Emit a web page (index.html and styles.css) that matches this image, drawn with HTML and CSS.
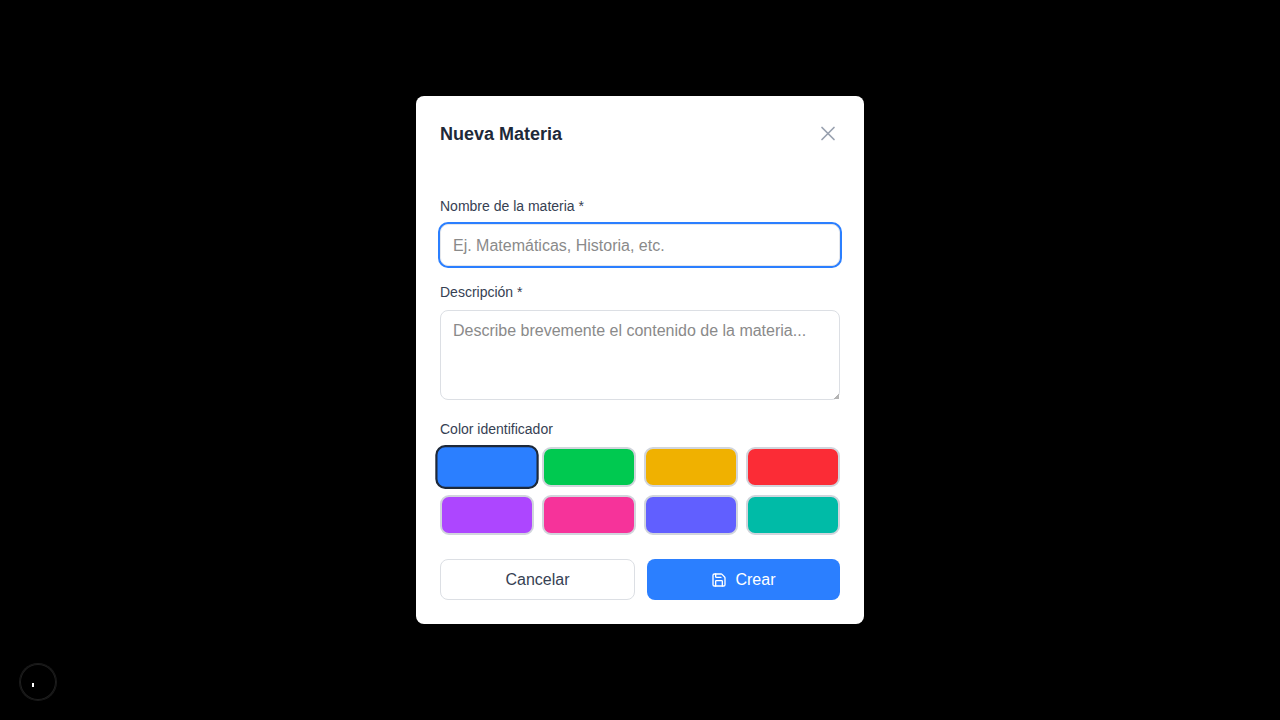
FILE: index.html
```html
<!DOCTYPE html>
<html lang="es">
<head>
<meta charset="utf-8">
<title>Nueva Materia</title>
<link rel="stylesheet" href="styles.css">
</head>
<body>
<div class="overlay">
  <section class="modal" role="dialog" aria-labelledby="modal-title">
    <header class="modal-header">
      <h2 class="modal-title" id="modal-title">Nueva Materia</h2>
      <button class="close" type="button" aria-label="Cerrar">
        <svg width="24" height="24" viewBox="0 0 24 24" fill="none" stroke="currentColor" stroke-width="1.7" stroke-linecap="round" stroke-linejoin="round"><path d="M18 5.500 6 17.500"/><path d="m6 5.500 12 12"/></svg>
      </button>
    </header>
    <form class="form">
      <div class="field">
        <label class="label" for="name">Nombre de la materia *</label>
        <input class="control control-active" id="name" type="text" placeholder="Ej. Matemáticas, Historia, etc.">
      </div>
      <div class="field">
        <label class="label" for="description">Descripción *</label>
        <textarea class="control" id="description" rows="3" placeholder="Describe brevemente el contenido de la materia..."></textarea>
      </div>
      <div class="field field-colors" role="group" aria-labelledby="color-label">
        <span class="label" id="color-label">Color identificador</span>
        <div class="swatches">
          <button class="swatch blue selected" type="button" aria-label="Azul"></button>
          <button class="swatch green" type="button" aria-label="Verde"></button>
          <button class="swatch yellow" type="button" aria-label="Amarillo"></button>
          <button class="swatch red" type="button" aria-label="Rojo"></button>
          <button class="swatch purple" type="button" aria-label="Morado"></button>
          <button class="swatch pink" type="button" aria-label="Rosa"></button>
          <button class="swatch indigo" type="button" aria-label="Índigo"></button>
          <button class="swatch teal" type="button" aria-label="Turquesa"></button>
        </div>
      </div>
      <div class="actions">
        <button class="button cancel" type="button">Cancelar</button>
        <button class="button create" type="submit">
          <svg width="16" height="16" viewBox="0 0 24 24" fill="none" stroke="currentColor" stroke-width="2" stroke-linecap="round" stroke-linejoin="round"><path d="M15.2 3a2 2 0 0 1 1.4.6l3.8 3.8a2 2 0 0 1 .6 1.4V19a2 2 0 0 1-2 2H5a2 2 0 0 1-2-2V5a2 2 0 0 1 2-2z"/><path d="M17 21v-7a1 1 0 0 0-1-1H8a1 1 0 0 0-1 1v7"/><path d="M7 3v4a1 1 0 0 0 1 1h7"/></svg>
          Crear
        </button>
      </div>
    </form>
  </section>
</div>
<div class="badge"><span class="badge-mark"></span></div>
</body>
</html>
```
FILE: styles.css
```css
* { box-sizing: border-box; }
body {
  margin: 0;
  background: #000;
  color: #364153;
  font-family: "Liberation Sans", Arial, sans-serif;
  font-size: 16px;
  line-height: 24px;
}
button, input, textarea { font: inherit; color: inherit; }
button { cursor: pointer; }
.overlay {
  min-height: 100vh;
  padding: 16px;
  display: flex;
  align-items: center;
  justify-content: center;
}
.modal {
  width: 100%;
  max-width: 448px;
  background: #fff;
  border-radius: 8px;
}
.modal-header {
  display: flex;
  align-items: center;
  justify-content: space-between;
  padding: 24px;
}
.modal-title {
  margin: 0;
  font-size: 18px;
  line-height: 28px;
  font-weight: 700;
  color: #1e2939;
}
.close {
  display: flex;
  padding: 0;
  border: 0;
  background: none;
  color: #99a1af;
}
.form {
  display: flex;
  flex-direction: column;
  gap: 16px;
  padding: 24px;
}
.field {
  display: flex;
  flex-direction: column;
  gap: 8px;
}
.field-colors { margin-top: 3px; }
.label {
  font-size: 14px;
  line-height: 20px;
}
.control {
  display: block;
  width: 100%;
  padding: 8px 12px;
  border: 1px solid #dcdfe4;
  border-radius: 8px;
  background: #fff;
  outline: none;
}
.control::placeholder { color: #8a8a8a; }
.control-active {
  padding: 9px 12px 7px;
  border-color: #e5e7eb;
  box-shadow: 0 0 0 2px #2b7fff;
}
textarea.control { resize: vertical; }
textarea.control::-webkit-resizer {
  background: linear-gradient(135deg, transparent 82%, #b4b4b4 82%);
}
.swatches {
  display: grid;
  grid-template-columns: repeat(4, 1fr);
  gap: 8px;
}
.swatch {
  height: 40px;
  padding: 0;
  border: 2px solid #d1d5dc;
  border-radius: 9px;
}
.selected {
  border-color: #1e2939;
  transform: scale(1.1);
}
.blue { background: #2b7fff; }
.green { background: #00c950; }
.yellow { background: #f0b100; }
.red { background: #fb2c36; }
.purple { background: #ad46ff; }
.pink { background: #f6339a; }
.indigo { background: #615fff; }
.teal { background: #00bba7; }
.actions {
  display: flex;
  gap: 12px;
  padding-top: 8px;
}
.button {
  flex: 1 1 0;
  display: flex;
  align-items: center;
  justify-content: center;
  gap: 8px;
  min-height: 41px;
  padding: 0 16px;
  border: 0;
  border-radius: 8px;
}
.cancel {
  border: 1px solid #dcdfe4;
  background: #fff;
}
.create {
  background: #2b7fff;
  color: #fff;
}
.badge {
  position: fixed;
  left: 20px;
  bottom: 20px;
  width: 36px;
  height: 36px;
  border-radius: 50%;
  background: #000;
  box-shadow: 0 0 0 1px #1a1a1a, inset 0 0 0 1px #1f1f1f;
}
.badge-mark {
  position: absolute;
  left: 12px;
  top: 19px;
  width: 2px;
  height: 4px;
  background: #fff;
}
```
